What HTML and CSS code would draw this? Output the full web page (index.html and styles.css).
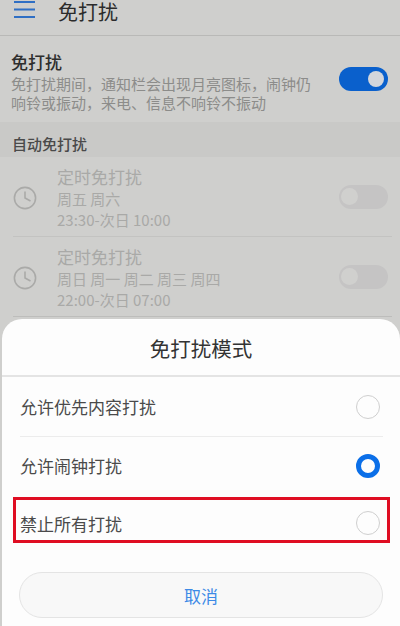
FILE: index.html
```html
<!DOCTYPE html>
<html lang="zh">
<head>
<meta charset="utf-8">
<title>免打扰</title>
<link rel="stylesheet" href="styles.css">
</head>
<body>
<div class="screen">
  <header class="topbar">
    <svg class="menu" width="22" height="19" viewBox="0 0 22 19"><path d="M0 2h21M0 9.5h21M0 17h21" stroke="#2f6fc4" stroke-width="2" fill="none"/></svg>
    <h1 class="title">免打扰</h1>
  </header>
  <section class="main-row">
    <div class="main-text">
      <div class="main-name">免打扰</div>
      <div class="main-desc">免打扰期间，通知栏会出现月亮图标，闹钟仍响铃或振动，来电、信息不响铃不振动</div>
    </div>
    <span class="switch switch-on"><span class="knob"></span></span>
  </section>
  <div class="section-head">自动免打扰</div>
  <div class="sched">
    <svg class="clock" width="24" height="24" viewBox="0 0 24 24"><circle cx="12" cy="12" r="10.6" fill="none" stroke="#aaaaa8" stroke-width="1.6"/><path d="M12 5.5V12l5.5 3" fill="none" stroke="#aaaaa8" stroke-width="1.6"/></svg>
    <div class="sched-text">
      <div class="sched-name">定时免打扰</div>
      <div class="sched-line">周五 周六</div>
      <div class="sched-line">23:30-次日 10:00</div>
    </div>
    <span class="switch switch-off"><span class="knob"></span></span>
  </div>
  <div class="sched sched-last">
    <svg class="clock" width="24" height="24" viewBox="0 0 24 24"><circle cx="12" cy="12" r="10.6" fill="none" stroke="#aaaaa8" stroke-width="1.6"/><path d="M12 5.5V12l5.5 3" fill="none" stroke="#aaaaa8" stroke-width="1.6"/></svg>
    <div class="sched-text">
      <div class="sched-name">定时免打扰</div>
      <div class="sched-line">周日 周一 周二 周三 周四</div>
      <div class="sched-line">22:00-次日 07:00</div>
    </div>
    <span class="switch switch-off"><span class="knob"></span></span>
  </div>

  <div class="sheet">
    <div class="sheet-title">免打扰模式</div>
    <div class="options">
      <div class="option option-line"><span>允许优先内容打扰</span><span class="radio"></span></div>
      <div class="option option-mid"><span>允许闹钟打扰</span><span class="radio radio-on"></span></div>
      <div class="option option-boxed"><span>禁止所有打扰</span><span class="radio"></span></div>
    </div>
    <button class="cancel" type="button">取消</button>
  </div>
</div>
</body>
</html>
```

FILE: styles.css
```css
html, body {
  margin: 0;
  padding: 0;
}
body {
  width: 400px;
  height: 626px;
  overflow: hidden;
  font-family: "Noto Sans CJK SC", "Noto Sans", sans-serif;
}
.screen {
  position: relative;
  width: 400px;
  height: 626px;
  overflow: hidden;
  background: #cfcfcd;
}
.topbar {
  display: flex;
  align-items: flex-start;
  height: 36px;
  padding-left: 14px;
  box-sizing: border-box;
  border-bottom: 1px solid #b9b9b7;
}
.title {
  margin: 1px 0 0 22px;
  font-size: 20px;
  font-weight: 400;
  line-height: 22px;
  color: #2b2b2b;
}
.main-row {
  display: flex;
  align-items: center;
  justify-content: space-between;
  height: 86px;
  padding: 0 12px 0 11px;
}
.main-text {
  width: 305px;
  margin-top: 3px;
}
.main-name {
  font-size: 17px;
  line-height: 24px;
  font-weight: 500;
  color: #2e2e2e;
}
.main-desc {
  font-size: 15px;
  line-height: 19px;
  color: #8c8c8a;
}
.switch {
  position: relative;
  display: block;
  flex: none;
  width: 49px;
  height: 24px;
  border-radius: 12px;
}
.switch-on {
  background: #0a60cc;
  margin-top: -1px;
}
.switch-off {
  background: #c5c4c4;
}
.knob {
  position: absolute;
  top: 4px;
  width: 16px;
  height: 16px;
  border-radius: 50%;
}
.switch-on .knob {
  right: 4px;
  background: #d3d6dc;
}
.switch-off .knob {
  left: 2px;
  top: 3px;
  width: 17px;
  height: 17px;
  background: #d0d0ce;
}
.section-head {
  height: 35px;
  padding: 10px 0 0 12px;
  box-sizing: border-box;
  font-size: 15px;
  font-weight: 500;
  line-height: 24px;
  color: #4a4a4a;
  background: #c9c9c7;
}
.sched {
  display: flex;
  align-items: center;
  height: 80px;
  margin: 0 8px 0 13px;
  box-sizing: border-box;
  border-bottom: 1px solid #c3c3c1;
}
.sched-last {
  border-bottom-color: #bdbdbb;
}
.clock {
  flex: none;
  margin: 2px 20px 0 0;
}
.sched-text {
  flex: 1;
  margin-top: 2px;
}
.sched-name {
  font-size: 17px;
  line-height: 23px;
  color: #a9a9a7;
}
.sched-line {
  font-size: 15px;
  line-height: 21px;
  color: #a9a9a7;
}
.sched .switch {
  margin-right: 4px;
  margin-top: 1px;
}
.sheet {
  position: absolute;
  left: 2px;
  right: 0;
  top: 319px;
  bottom: 0;
  background: #fdfdfd;
  border-radius: 20px 20px 0 0;
}
.sheet-title {
  height: 58px;
  box-sizing: border-box;
  border-bottom: 2px solid #e4e4e4;
  font-size: 20.5px;
  line-height: 58px;
  text-align: center;
  color: #333;
}
.options {
  padding: 0 17px 0 18px;
}
.option {
  display: flex;
  align-items: center;
  justify-content: space-between;
  height: 60px;
  padding-right: 3px;
  box-sizing: border-box;
  font-size: 17px;
  color: #4a4a4a;
}
.option-line {
  border-bottom: 1px solid #ececec;
}
.option-mid {
  height: 57px;
}
.option-boxed {
  position: relative;
  height: 58px;
}
.option-boxed::after {
  content: "";
  position: absolute;
  left: -7px;
  right: -7px;
  top: 3px;
  bottom: 9px;
  border: 3px solid #df0d22;
}
.radio {
  display: block;
  width: 24px;
  height: 24px;
  box-sizing: border-box;
  border: 1.5px solid #cfcfcf;
  border-radius: 50%;
}
.radio-on {
  border: 5.5px solid #0b6fe8;
}
.cancel {
  display: block;
  width: 364px;
  height: 46px;
  margin: 20px 0 0 17px;
  padding: 0;
  border: 1px solid #e4e4e4;
  border-radius: 23px;
  background: #f8f8f8;
  font-family: inherit;
  font-size: 17px;
  color: #3d8ae6;
}
```
